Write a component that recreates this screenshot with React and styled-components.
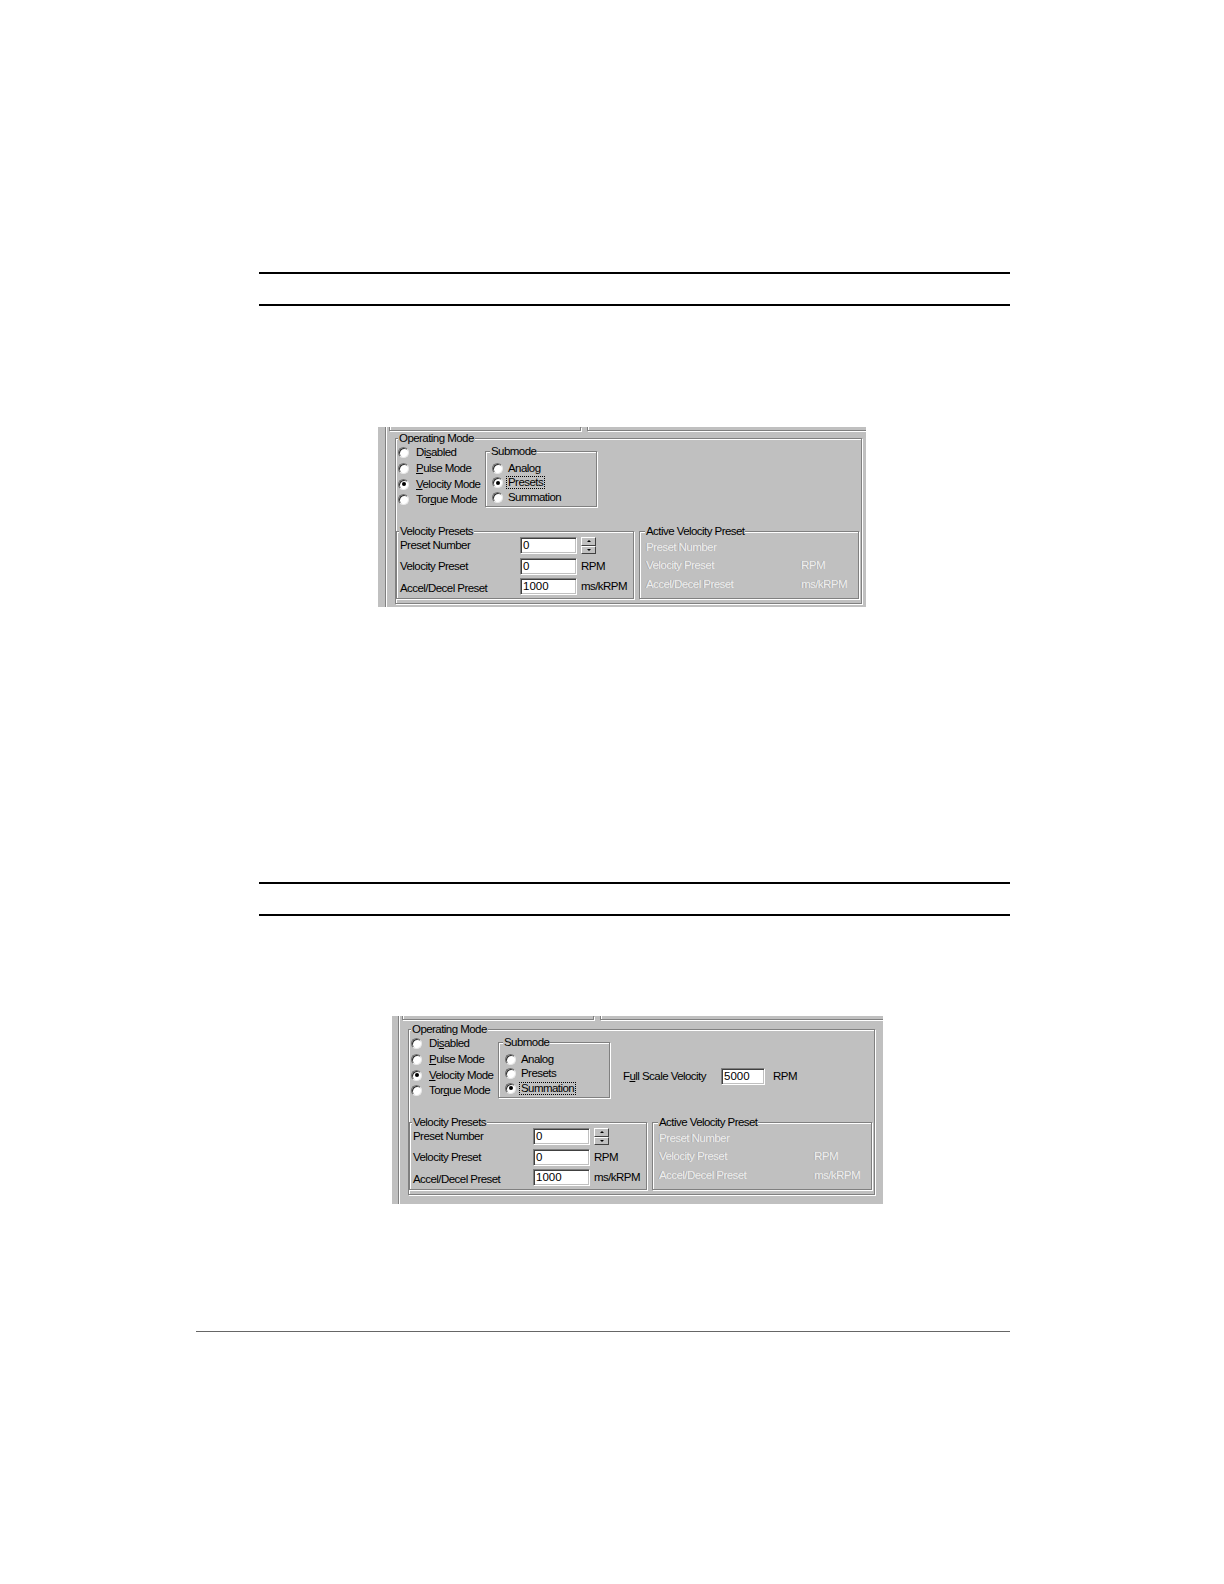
import React from "react";
import styled, { createGlobalStyle } from "styled-components";

const GlobalStyle = createGlobalStyle`
  html, body {
    margin: 0;
    padding: 0;
    background: #ffffff;
  }
  body {
    font-family: "Liberation Sans", Arial, sans-serif;
  }
`;

const Page = styled.div`
  width: 1224px;
  height: 1584px;
  padding-top: 272px;
  box-sizing: border-box;
  background: #ffffff;
  overflow: hidden;
`;

const RulePair = styled.div`
  margin-top: ${(p) => p.$top || 0}px;
  margin-left: 259px;
  width: 751px;
  height: 30px;
  border-top: 2px solid #000;
  border-bottom: 2px solid #000;
`;

const FootRule = styled.div`
  margin-top: ${(p) => p.$top}px;
  margin-left: 196px;
  width: 814px;
  height: 1px;
  background: #666666;
`;

// the pasted dialog screenshot
const Shot = styled.div`
  margin-top: ${(p) => p.$top}px;
  margin-left: ${(p) => p.$left}px;
  width: ${(p) => p.$width}px;
  height: ${(p) => p.$height}px;
  box-sizing: border-box;
  padding-left: ${(p) => p.$pad}px;
  background: #c0c0c0;
  overflow: hidden;
  color: #000;
  font-size: 11.5px;
  line-height: 13px;
  letter-spacing: -0.55px;
`;

const Frame = styled.div`
  height: 100%;
  border-left: 1px solid #808080;
  box-shadow: inset 1px 0 0 #ffffff;
  display: flex;
  flex-direction: column;
`;

const UpperRow = styled.div`
  flex: none;
  display: flex;
  gap: 6px;
  height: 4px;
  margin-left: 3px;
`;

const UpperBox = styled.div`
  flex: ${(p) => (p.$w ? "none" : "1")};
  width: ${(p) => (p.$w ? `${p.$w}px` : "auto")};
  margin-right: ${(p) => (p.$w ? "0" : "-6px")};
  border: 1px solid #808080;
  border-top: none;
  box-shadow: 1px 1px 0 #ffffff, inset 1px 0 0 #ffffff;
`;

const Group = styled.div`
  position: relative;
  flex: none;
  box-sizing: border-box;
  border: 1px solid #808080;
  box-shadow: inset 1px 1px 0 #ffffff, 1px 1px 0 #ffffff;
`;

const Caption = styled.span`
  position: absolute;
  top: -7px;
  left: ${(p) => p.$left || 2}px;
  padding: 0 1px;
  background: #c0c0c0;
  white-space: nowrap;
`;

const OpGroup = styled(Group)`
  margin-top: ${(p) => p.$gap}px;
  margin-left: 9px;
  width: 467px;
  padding: 6px 2px 4px 0;
`;

const TopArea = styled.div`
  display: flex;
  align-items: flex-start;
  height: 63px;
`;

const RadioColumn = styled.div`
  flex: none;
  width: 87px;
  padding-left: 2px;
  display: flex;
  flex-direction: column;
`;

const RadioRow = styled.div`
  display: flex;
  align-items: center;
  gap: ${(p) => p.$gap}px;
  height: ${(p) => p.$h}px;
  white-space: nowrap;
`;

const RadioDot = styled.span`
  flex: none;
  width: 11px;
  height: 11px;
  box-sizing: border-box;
  border-radius: 50%;
  border: 1px solid;
  border-color: #707070 #e8e8e8 #e8e8e8 #707070;
  background: #ffffff;
  box-shadow: inset 1px 1px 0 #303030;
  display: flex;
  align-items: center;
  justify-content: center;

  &::after {
    content: "";
    width: 4px;
    height: 4px;
    border-radius: 50%;
    background: ${(p) => (p.$on ? "#000" : "transparent")};
  }
`;

const RadioText = styled.span`
  padding: 0 1px;
  margin-left: -1px;
  line-height: 11px;
  border: 1px dotted ${(p) => (p.$focus ? "#000" : "transparent")};
`;

const SubGroup = styled(Group)`
  margin-top: 6px;
  width: 112px;
  height: 56px;
  padding: 9px 0 0 6px;
`;

const FullScale = styled.div`
  display: flex;
  align-items: center;
  margin-top: 32px;
  margin-left: 13px;
  height: 17px;
  white-space: nowrap;
`;

const FieldLabel = styled.span`
  width: ${(p) => p.$w}px;
  flex: none;
`;

const Field = styled.div`
  flex: none;
  width: ${(p) => p.$w}px;
  height: 17px;
  box-sizing: border-box;
  padding: 1px 0 0 2px;
  background: #ffffff;
  border: 1px solid;
  border-color: #808080 #ffffff #ffffff #808080;
  box-shadow: inset 1px 1px 0 #404040, inset -1px -1px 0 #c0c0c0;
  line-height: 13px;
  letter-spacing: 0;
`;

const Unit = styled.span`
  margin-left: ${(p) => p.$ml || 0}px;
  white-space: nowrap;
`;

const BottomRow = styled.div`
  display: flex;
  gap: 5px;
  margin-top: 23px;
`;

const PresetGroup = styled(Group)`
  width: 238px;
  padding: 5px 0 3px 3px;
  display: grid;
  grid-template-columns: 120px 57px auto;
  grid-auto-rows: 17px;
  row-gap: 3.5px;
  align-items: center;
`;

const Cell = styled.div`
  display: flex;
  align-items: center;
  white-space: nowrap;
  padding-left: ${(p) => p.$pl || 0}px;
  padding-top: ${(p) => p.$pt || 0}px;
`;

const Spinner = styled.div`
  display: flex;
  flex-direction: column;
  width: 15px;
  height: 17px;
  margin-left: 4px;
`;

const SpinHalf = styled.div`
  flex: 1;
  box-sizing: border-box;
  border: 1px solid;
  border-color: #ffffff #404040 #404040 #ffffff;
  background: #c0c0c0;
  display: flex;
  align-items: center;
  justify-content: center;

  &::after {
    content: "";
    width: 0;
    height: 0;
    border-left: 2px solid transparent;
    border-right: 2px solid transparent;
    ${(p) =>
      p.$up
        ? "border-bottom: 2px solid #000;"
        : "border-top: 2px solid #000;"}
  }
`;

const ActiveGroup = styled(Group)`
  width: 220px;
  padding: 6px 0 0 6px;
  display: grid;
  grid-template-columns: 155px auto;
  grid-auto-rows: 18.5px;
  align-items: center;
`;

// greyed-out (disabled) static text
const Dim = styled.span`
  color: #eeeeee;
  text-shadow: -1px 0 0 rgba(128, 128, 128, 0.45);
  white-space: nowrap;
`;

const modes = [
  ["Di", "s", "abled"],
  ["", "P", "ulse Mode"],
  ["", "V", "elocity Mode"],
  ["Tor", "q", "ue Mode"],
];

const submodes = ["Analog", "Presets", "Summation"];

function Screenshot({ top, left, width, height, pad, gap, submode, fullScale }) {
  return (
    <Shot $top={top} $left={left} $width={width} $height={height} $pad={pad}>
      <Frame>
        <UpperRow>
          <UpperBox $w={190} />
          <UpperBox />
        </UpperRow>

        <OpGroup $gap={gap}>
          <Caption>Operating Mode</Caption>
          <TopArea>
            <RadioColumn>
              {modes.map(([a, u, b], i) => (
                <RadioRow key={i} $h={15.7} $gap={6}>
                  <RadioDot $on={i === 2} />
                  <RadioText>
                    {a}
                    <u>{u}</u>
                    {b}
                  </RadioText>
                </RadioRow>
              ))}
            </RadioColumn>

            <SubGroup>
              <Caption $left={4}>Submode</Caption>
              {submodes.map((s) => (
                <RadioRow key={s} $h={14.5} $gap={4}>
                  <RadioDot $on={s === submode} />
                  <RadioText $focus={s === submode}>{s}</RadioText>
                </RadioRow>
              ))}
            </SubGroup>

            {fullScale && (
              <FullScale>
                <FieldLabel $w={98}>
                  F<u>u</u>ll Scale Velocity
                </FieldLabel>
                <Field $w={44}>5000</Field>
                <Unit $ml={8}>RPM</Unit>
              </FullScale>
            )}
          </TopArea>

          <BottomRow>
            <PresetGroup>
              <Caption>Velocity Presets</Caption>
              <Cell>Preset Number</Cell>
              <Field $w={57}>0</Field>
              <Cell>
                <Spinner>
                  <SpinHalf $up />
                  <SpinHalf />
                </Spinner>
              </Cell>
              <Cell>Velocity Preset</Cell>
              <Field $w={57}>0</Field>
              <Cell $pl={4}>RPM</Cell>
              <Cell $pt={3}>Accel/Decel Preset</Cell>
              <Field $w={57}>1000</Field>
              <Cell $pl={4}>ms/kRPM</Cell>
            </PresetGroup>

            <ActiveGroup>
              <Caption $left={5}>Active Velocity Preset</Caption>
              <Dim>Preset Number</Dim>
              <span />
              <Dim>Velocity Preset</Dim>
              <Dim>RPM</Dim>
              <Dim>Accel/Decel Preset</Dim>
              <Dim>ms/kRPM</Dim>
            </ActiveGroup>
          </BottomRow>
        </OpGroup>
      </Frame>
    </Shot>
  );
}

export default function App() {
  return (
    <>
      <GlobalStyle />
      <Page>
        <RulePair />
        <Screenshot
          top={121}
          left={378}
          width={488}
          height={180}
          pad={7}
          gap={7}
          submode="Presets"
        />
        <RulePair $top={275} />
        <Screenshot
          top={100}
          left={392}
          width={491}
          height={188}
          pad={6}
          gap={9}
          submode="Summation"
          fullScale
        />
        <FootRule $top={127} />
      </Page>
    </>
  );
}
